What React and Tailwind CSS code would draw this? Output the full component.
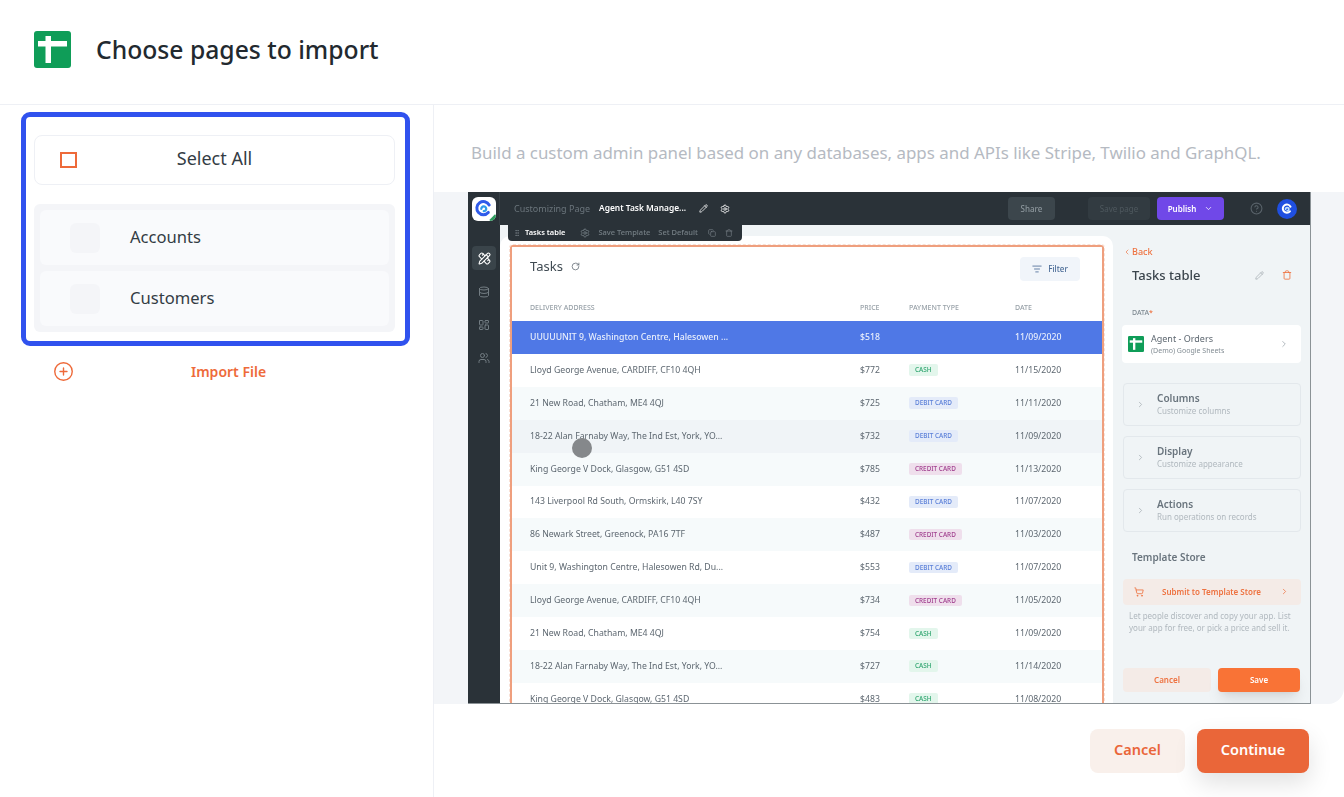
import React from 'react';
import {
  ChevronDown, ChevronLeft, ChevronRight, CircleHelp, CirclePlus, Copy, Database, GripVertical,
  LayoutDashboard, ListFilter, Pencil, PencilRuler, RotateCw, Settings, ShoppingCart, Trash, Users,
} from 'lucide-react';

const rows = [
  ['Lloyd George Avenue, CARDIFF, CF10 4QH', '$772', 'CASH', '11/15/2020', 'bg-white'],
  ['21 New Road, Chatham, ME4 4QJ', '$725', 'DEBIT CARD', '11/11/2020', 'bg-[#f6fafb]'],
  ['18-22 Alan Farnaby Way, The Ind Est, York, YO...', '$732', 'DEBIT CARD', '11/09/2020', 'bg-[#f0f4f7]'],
  ['King George V Dock, Glasgow, G51 4SD', '$785', 'CREDIT CARD', '11/13/2020', 'bg-[#f6fafb]'],
  ['143 Liverpool Rd South, Ormskirk, L40 7SY', '$432', 'DEBIT CARD', '11/07/2020', 'bg-white'],
  ['86 Newark Street, Greenock, PA16 7TF', '$487', 'CREDIT CARD', '11/03/2020', 'bg-[#f6fafb]'],
  ['Unit 9, Washington Centre, Halesowen Rd, Du...', '$553', 'DEBIT CARD', '11/07/2020', 'bg-white'],
  ['Lloyd George Avenue, CARDIFF, CF10 4QH', '$734', 'CREDIT CARD', '11/05/2020', 'bg-[#f6fafb]'],
  ['21 New Road, Chatham, ME4 4QJ', '$754', 'CASH', '11/09/2020', 'bg-white'],
  ['18-22 Alan Farnaby Way, The Ind Est, York, YO...', '$727', 'CASH', '11/14/2020', 'bg-[#f6fafb]'],
  ['King George V Dock, Glasgow, G51 4SD', '$483', 'CASH', '11/08/2020', 'bg-white'],
];

const badgeStyles = {
  CASH: 'bg-[#e3f6ec] text-[#2fa56f]',
  'DEBIT CARD': 'bg-[#e4ebf9] text-[#5a7fd8]',
  'CREDIT CARD': 'bg-[#efdfec] text-[#a1408f]',
};

const sections = [
  ['Columns', 'Customize columns'],
  ['Display', 'Customize appearance'],
  ['Actions', 'Run operations on records'],
];

const SheetsIcon = ({ className }) => (
  <svg viewBox="0 0 37 37" className={className}>
    <rect width="37" height="37" rx="3" fill="#0f9d58" />
    <rect x="4" y="10" width="29" height="5.5" fill="#fff" />
    <rect x="11.5" y="5" width="5.5" height="27" fill="#fff" />
  </svg>
);

const SwirlLogo = ({ className }) => (
  <svg viewBox="0 0 24 24" className={className} fill="none">
    <path d="M17.5 16.5a7.5 7.5 0 1 1 1-8.5" stroke="#2f5bea" strokeWidth="3.4" strokeLinecap="round" />
    <path d="M9.5 12.5a2.8 2.8 0 1 1 2.8 2.6" stroke="#2f9bea" strokeWidth="2.6" strokeLinecap="round" />
  </svg>
);

const Preview = () => (
  <div className="relative w-[843px] h-[512px] overflow-hidden flex flex-col bg-[#f0f4f6] border-r border-b border-[#8b9296] blur-[0.3px] text-[#5d6770]">
    <div className="h-[33px] shrink-0 bg-[#2a3238] flex items-center whitespace-nowrap pr-[13px]">
      <div className="w-[32px] h-full flex items-center justify-center border-r border-[#363f45]">
        <div className="relative w-[24px] h-[24px] rounded-[6px] bg-white overflow-hidden flex items-center justify-center">
          <SwirlLogo className="w-[21px] h-[21px]" />
          <div className="absolute -right-[3px] -bottom-[3px] w-[8px] h-[8px] rotate-45 bg-[#2f9e5f]" />
        </div>
      </div>
      <span className="ml-[14px] text-[9px] text-[#6b757c]">Customizing Page</span>
      <span className="ml-[9px] text-[8.4px] font-semibold text-white">Agent Task Manage...</span>
      <Pencil className="ml-[13px] w-[9px] h-[9px] text-white" />
      <Settings className="ml-[12px] w-[10px] h-[10px] text-white" />
      <div className="ml-auto w-[47px] h-[23px] rounded bg-[#3c464c] flex items-center justify-center text-[8px] font-medium text-[#8c969c]">Share</div>
      <div className="ml-[33px] w-[62px] h-[23px] rounded bg-[#323b41] flex items-center justify-center text-[8px] text-[#4e585e]">Save page</div>
      <div className="ml-[7px] w-[67px] h-[23px] rounded bg-[#7048e8] flex items-center justify-center gap-[8px] text-[8px] font-semibold text-white">
        Publish <ChevronDown className="w-[9px] h-[9px]" />
      </div>
      <CircleHelp className="ml-[26px] w-[13px] h-[13px] text-[#59636a]" />
      <div className="ml-[14px] w-[20px] h-[20px] rounded-full bg-[#1f4fe0] flex items-center justify-center">
        <svg viewBox="0 0 24 24" className="w-[14px] h-[14px]" fill="none">
          <path d="M17 16a7 7 0 1 1 1-8" stroke="#fff" strokeWidth="3.5" strokeLinecap="round" />
          <path d="M9.5 12.5a2.8 2.8 0 1 1 2.8 2.6" stroke="#bfe0ff" strokeWidth="3" strokeLinecap="round" />
        </svg>
      </div>
    </div>

    <div className="flex-1 flex min-h-0">
      <div className="w-[32px] shrink-0 bg-[#2a3238] flex flex-col items-center pt-[21px] gap-[21px]">
        <div className="w-[24px] h-[24px] rounded bg-[#3a444a] flex items-center justify-center">
          <PencilRuler className="w-[13px] h-[13px] text-white" />
        </div>
        <Database className="w-[12px] h-[12px] -mt-[5px] text-[#737d83]" />
        <LayoutDashboard className="w-[12px] h-[12px] text-[#737d83]" />
        <Users className="w-[12px] h-[12px] text-[#737d83]" />
      </div>

      <div className="w-[613px] shrink-0 pt-[11px]">
        <div className="h-full bg-white rounded-t-[10px] pt-[9px] pl-[10px] pr-[9px]">
          <div className="h-full border-x-2 border-t-2 border-[#ef9f7e] rounded-t-[3px] outline-1 outline-dashed outline-[#f8e0d5] flex flex-col overflow-hidden">
            <div className="h-[56px] shrink-0 flex items-start pl-[18px] pr-[22px] pt-[10px] bg-white">
              <span className="text-[13px] leading-[18px] text-[#3f4a52]">Tasks</span>
              <RotateCw className="ml-[8px] mt-[5px] w-[9px] h-[9px] text-[#5d6770]" />
              <div className="ml-auto w-[60px] h-[24px] rounded bg-[#f1f5fa] flex items-center justify-center gap-[6px] text-[8px] font-medium text-[#4a6b96]">
                <ListFilter className="w-[10px] h-[10px]" /> Filter
              </div>
            </div>
            <div className="h-[18px] shrink-0 flex text-[7px] font-medium text-[#98a1a8]">
              <span className="pl-[18px] w-[348px]">DELIVERY ADDRESS</span>
              <span className="w-[49px]">PRICE</span>
              <span className="w-[106px]">PAYMENT TYPE</span>
              <span>DATE</span>
            </div>
            <div className="h-[33px] shrink-0 flex items-center bg-[#4f78e6] text-[8.7px] font-medium text-[#e8eefc]">
              <span className="pl-[18px] w-[348px]">UUUUUNIT 9, Washington Centre, Halesowen ...</span>
              <span className="w-[155px]">$518</span>
              <span>11/09/2020</span>
            </div>
            {rows.map(([address, price, payment, date, bg], i) => (
              <div key={i} className={`h-[32.9px] shrink-0 flex items-center text-[8.7px] text-[#5d6770] ${bg}`}>
                <span className="pl-[18px] w-[348px]">{address}</span>
                <span className="w-[49px]">{price}</span>
                <span className="w-[106px] -mt-[1px]">
                  <span className={`inline-block px-[6px] py-[1px] rounded-[2px] text-[6.4px] font-medium ${badgeStyles[payment]}`}>{payment}</span>
                </span>
                <span>{date}</span>
              </div>
            ))}
          </div>
        </div>
      </div>

      <div className="flex-1 flex flex-col pl-[10px] pr-[9px] pt-[20px]">
        <div className="flex items-center gap-[1px] text-[9px] font-medium text-[#ee7240]">
          <ChevronLeft className="w-[8px] h-[8px]" /> Back
        </div>
        <div className="flex items-center mt-[7px] pl-[9px]">
          <span className="text-[13px] font-medium text-[#3a444c]">Tasks table</span>
          <Pencil className="ml-auto w-[9px] h-[9px] text-[#a5adb3]" />
          <Trash className="ml-[18px] mr-[9px] w-[10px] h-[10px] text-[#ee7240]" />
        </div>
        <div className="mt-[23px] pl-[9px] text-[7px] font-medium text-[#7f8a92]">
          DATA<span className="text-[#ee7240]">*</span>
        </div>
        <div className="mt-[6px] -ml-[1px] h-[38px] rounded bg-white flex items-center pl-[6px] pr-[12px]">
          <SheetsIcon className="w-[16px] h-[16px]" />
          <div className="ml-[7px] leading-none">
            <div className="text-[9px] text-[#5d6770]">Agent - Orders</div>
            <div className="mt-[4px] text-[7px] text-[#838d94]">(Demo) Google Sheets</div>
          </div>
          <ChevronRight className="ml-auto w-[10px] h-[10px] text-[#a5adb3]" />
        </div>
        <div className="mt-[20px] flex flex-col gap-[10px]">
          {sections.map(([title, sub]) => (
            <div key={title} className="h-[43px] rounded border border-[#e3e8ec] flex items-center pl-[12px]">
              <ChevronRight className="w-[9px] h-[9px] text-[#a5adb3]" />
              <div className="ml-[12px] leading-none">
                <div className="text-[10px] font-semibold text-[#69747d]">{title}</div>
                <div className="mt-[4px] text-[8px] text-[#b0b8be]">{sub}</div>
              </div>
            </div>
          ))}
        </div>
        <div className="mt-[18px] pl-[9px] text-[10px] font-semibold text-[#69747d]">Template Store</div>
        <div className="mt-[14px] h-[26px] rounded bg-[#f4ebe7] flex items-center pl-[11px] pr-[12px] text-[8px] font-semibold text-[#ee7240]">
          <ShoppingCart className="w-[10px] h-[10px]" />
          <span className="ml-[18px]">Submit to Template Store</span>
          <ChevronRight className="ml-auto w-[9px] h-[9px]" />
        </div>
        <div className="mt-[5px] pl-[6px] text-[8px] leading-[12px] text-[#b0b8be]">
          Let people discover and copy your app. List<br />your app for free, or pick a price and sell it.
        </div>
        <div className="mt-[34px] flex gap-[7px]">
          <div className="w-[88px] h-[24px] rounded bg-[#f4ebe7] flex items-center justify-center text-[8px] font-semibold text-[#ee7240]">Cancel</div>
          <div className="w-[82px] h-[24px] rounded bg-[#f97336] shadow-lg flex items-center justify-center text-[8px] font-semibold text-white">Save</div>
        </div>
      </div>
    </div>

    {/* floating toolbar and cursor sit over the table */}
    <div className="absolute left-[40px] top-[33px] w-[234px] h-[16px] rounded-b bg-[#2a3238] flex items-center pl-[5px] text-[7.5px] whitespace-nowrap text-[#757f85]">
      <GripVertical className="w-[8px] h-[8px]" />
      <span className="ml-[4px] font-semibold text-white">Tasks table</span>
      <Settings className="ml-[15px] w-[10px] h-[10px]" />
      <span className="ml-[8px] font-medium">Save Template</span>
      <span className="ml-[8px] font-medium">Set Default</span>
      <Copy className="ml-[10px] w-[8px] h-[8px]" />
      <Trash className="ml-[9px] w-[8px] h-[8px]" />
    </div>
    <div className="absolute left-[104px] top-[246px] w-[20px] h-[20px] rounded-full bg-[#85888b]" />
  </div>
);

export default function App() {
  return (
    <div className="w-[1344px] h-[797px] bg-white overflow-hidden flex flex-col font-['Noto_Sans',sans-serif]">
      <header className="h-[105px] shrink-0 border-b border-[#eef0f5] flex items-center pl-[34px] pb-[5px]">
        <SheetsIcon className="w-[37px] h-[37px]" />
        <h1 className="ml-[25px] text-[24.7px] font-medium text-[#22292f]">Choose pages to import</h1>
      </header>

      <div className="flex-1 flex min-h-0">
        <aside className="w-[434px] shrink-0 border-r border-[#eef0f5] pl-[21px] pt-[7px]">
          <div className="w-[389px] h-[234px] rounded-[9px] border-[5px] border-[#3052ee] pl-[8px] pr-[10px] pt-[18px]">
            <div className="h-[50px] rounded-[8px] border border-[#eef0f5] flex items-center relative">
              <div className="absolute left-[25px] top-[16px] w-[17px] h-[16px] border-2 border-[#ee6a3a]" />
              <span className="w-full pb-[4px] text-center text-[18px] text-[#333c44]">Select All</span>
            </div>
            <div className="mt-[19px] h-[128px] rounded-[6px] bg-[#f4f5f8] p-[6px] flex flex-col gap-[6px]">
              {['Accounts', 'Customers'].map((name) => (
                <div key={name} className="h-[55px] rounded-[6px] bg-[#f9fafc] flex items-center pl-[30px]">
                  <div className="w-[30px] h-[30px] rounded-[6px] bg-[#f4f5f8]" />
                  <span className="ml-[30px] pb-[1px] text-[16.6px] text-[#333c44]">{name}</span>
                </div>
              ))}
            </div>
          </div>
          <div className="mt-[15px] w-[389px] flex items-center pl-[32px]">
            <CirclePlus className="w-[21px] h-[21px] text-[#ee6a3a]" strokeWidth={1.6} />
            <span className="ml-[117px] text-[14px] font-semibold text-[#ee6a3a]">Import File</span>
          </div>
        </aside>

        <main className="flex-1 flex flex-col min-w-0">
          <p className="h-[87px] shrink-0 pl-[37px] pt-[35px] text-[16.9px] text-[#b5bac2]">
            Build a custom admin panel based on any databases, apps and APIs like Stripe, Twilio and GraphQL.
          </p>
          <div className="h-[512px] shrink-0 bg-[#f3f5f8] rounded-br-[16px] pl-[34px]">
            <Preview />
          </div>
          <div className="mt-[25px] flex justify-end gap-[12px] pr-[35px]">
            <button className="w-[95px] h-[44px] pb-[2px] rounded-[8px] bg-[#f9f0eb] text-[14.5px] font-semibold text-[#ea6639]">Cancel</button>
            <button className="w-[112px] h-[44px] pb-[2px] rounded-[8px] bg-[#ea6639] text-[14.5px] font-semibold text-white shadow-[0_10px_24px_rgba(0,0,0,0.12)]">Continue</button>
          </div>
        </main>
      </div>
    </div>
  );
}
